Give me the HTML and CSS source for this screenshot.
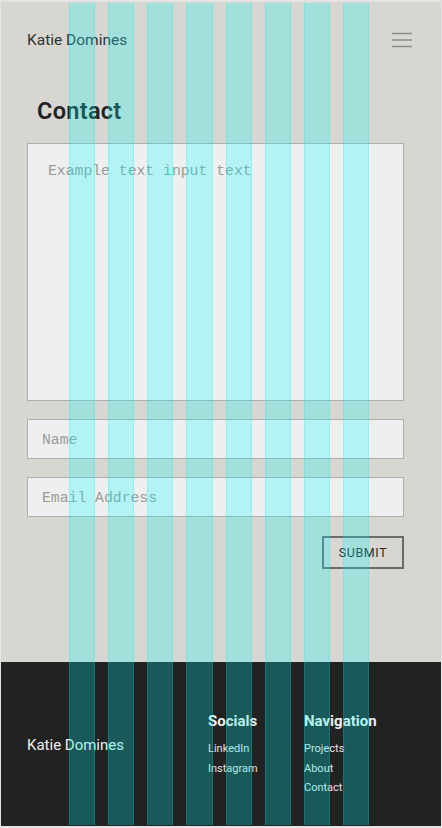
FILE: index.html
```html
<!DOCTYPE html>
<html lang="en">
<head>
<meta charset="utf-8">
<title>Contact — Katie Domines</title>
<link rel="stylesheet" href="styles.css">
</head>
<body>
<div class="frame">
  <header class="topbar">
    <a class="brand" href="#">Katie Domines</a>
    <button class="menu" type="button" aria-label="Menu">
      <svg width="20" height="16" viewBox="0 0 20 16" aria-hidden="true">
        <path d="M0 1.5H20M0 8H20M0 14.5H20" stroke="#8a8a8a" stroke-width="1.6" fill="none"/>
      </svg>
    </button>
  </header>

  <main class="content">
    <h1 class="title">Contact</h1>
    <form class="contact-form">
      <textarea class="field field-area" placeholder="Example text input text"></textarea>
      <input class="field field-line" type="text" placeholder="Name">
      <input class="field field-line" type="email" placeholder="Email Address">
      <div class="actions">
        <button class="submit" type="button">SUBMIT</button>
      </div>
    </form>
  </main>

  <footer class="footer">
    <div class="footer-brand">Katie Domines</div>
    <div class="footer-col">
      <h2 class="footer-head">Socials</h2>
      <ul class="footer-links">
        <li>LinkedIn</li>
        <li>Instagram</li>
      </ul>
    </div>
    <div class="footer-col">
      <h2 class="footer-head">Navigation</h2>
      <ul class="footer-links">
        <li>Projects</li>
        <li>About</li>
        <li>Contact</li>
      </ul>
    </div>
  </footer>

  <div class="grid-overlay" aria-hidden="true">
    <span></span><span></span><span></span><span></span>
    <span></span><span></span><span></span><span></span>
  </div>
</div>
</body>
</html>
```

FILE: styles.css
```css
* { box-sizing: border-box; }

html {
  background: #e4e4e4;
}

body {
  margin: 0;
  padding: 2px 1px 2px 1px;
  font-family: Roboto, "Noto Sans", Arial, sans-serif;
}

.frame {
  position: relative;
  background: #d8d6d1;
  height: 824px;
  display: flex;
  flex-direction: column;
}

.topbar {
  height: 76px;
  display: flex;
  align-items: center;
  justify-content: space-between;
  padding: 0 29px 0 26px;
}

.brand {
  font-size: 15.5px;
  color: #333;
  text-decoration: none;
}

.menu {
  border: 0;
  background: none;
  padding: 0;
  width: 20px;
  height: 16px;
  display: block;
}
.menu svg { display: block; }

.content {
  flex: 1;
  padding: 18px 37px 0 26px;
}

.title {
  margin: 0 0 17px 10px;
  font-size: 23.5px;
  line-height: 30px;
  font-weight: 600;
  color: #222;
  letter-spacing: 0.3px;
}

.contact-form {
  display: flex;
  flex-direction: column;
  gap: 18px;
}

.field {
  display: block;
  width: 100%;
  margin: 0;
  background: #efefef;
  border: 1px solid #aeaeae;
  border-radius: 0;
  font-family: "Liberation Mono", "DejaVu Sans Mono", monospace;
  font-size: 14.75px;
  color: #333;
  outline: none;
}
.field::placeholder { color: #9a9a9a; opacity: 1; }

.field-area {
  height: 258px;
  resize: none;
  padding: 17px 20px;
  line-height: 20px;
}

.field-line {
  height: 40px;
  padding: 2px 14px 0;
}

.actions {
  display: flex;
  justify-content: flex-end;
  margin-top: 1px;
}

.submit {
  width: 82px;
  height: 33px;
  background: transparent;
  border: 2px solid #6a6a6a;
  font-family: Roboto, "Noto Sans", Arial, sans-serif;
  font-size: 12.5px;
  letter-spacing: 0.6px;
  color: #2a2a2a;
  padding: 0;
}

.footer {
  height: 164px;
  background: #222;
  display: grid;
  grid-template-columns: 181px 96px 1fr;
  padding: 49px 0 0 26px;
  color: #eee;
}

.footer-brand {
  font-size: 15px;
  line-height: 20px;
  margin-top: 24px;
  color: #eee;
}

.footer-head {
  margin: 0 0 7px 0;
  font-size: 15px;
  line-height: 20px;
  font-weight: 700;
  color: #eee;
}

.footer-links {
  list-style: none;
  margin: 0;
  padding: 0;
  font-size: 11px;
  line-height: 19.5px;
  padding-top: 1px;
  color: #e2e2e2;
}

.grid-overlay {
  position: absolute;
  top: 1px;
  bottom: 1px;
  left: 68px;
  width: 300px;
  display: grid;
  grid-template-columns: repeat(8, 1fr);
  column-gap: 13px;
  pointer-events: none;
}

.grid-overlay span {
  background: rgba(0, 255, 255, 0.25);
  border-left: 1px solid rgba(0, 230, 230, 0.2);
  border-right: 1px solid rgba(0, 230, 230, 0.2);
}
```
